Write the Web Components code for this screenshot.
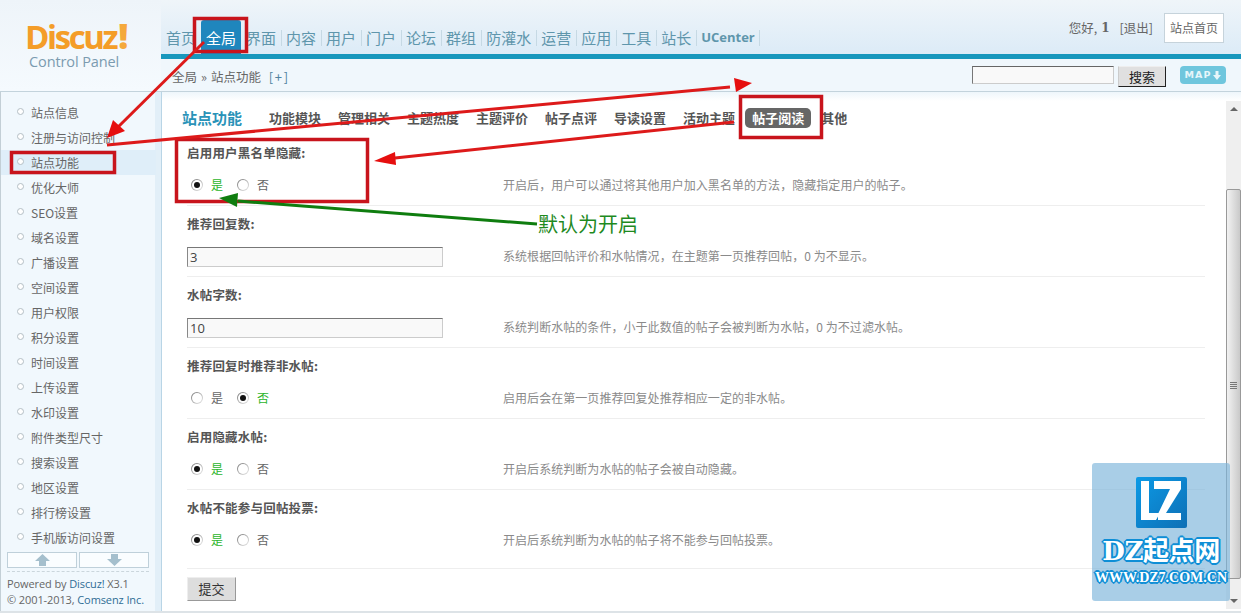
<!DOCTYPE html>
<html lang="zh">
<head>
<meta charset="utf-8">
<title>Discuz! Control Panel</title>
<style>
html, body { margin: 0; height: 100%; overflow: hidden; background: #fff; }
body { font: 12px "Noto Sans CJK SC", sans-serif; color: #666; }
</style>
</head>
<body>
<dz-app></dz-app>
<script>
const CJK = '"Noto Sans CJK SC", "Liberation Sans", sans-serif';

const define = (name, html, setup) => {
  customElements.define(name, class extends HTMLElement {
    constructor() {
      super();
      this.attachShadow({ mode: "open" });
      this.shadowRoot.innerHTML = html;
    }
    connectedCallback() {
      if (setup) setup(this, this.shadowRoot);
    }
  });
};

define("dz-logo", `
<style>
:host { display: block; width: 161px; height: 91px; box-sizing: border-box; padding-top: 21px; background: linear-gradient(#eef4f9, #f5fafe); }
.mark { font: bold 33px/30px "Open Sans", sans-serif; letter-spacing: -2.4px; color: #f49d28; padding-left: 25px; }
.mark b { color: #f5a93c; font-size: 35px; margin-left: 2px; }
.sub { font: 14.5px/18px "Open Sans", sans-serif; color: #7b9bb0; padding-left: 29px; margin-top: 1px; letter-spacing: -.1px; }
</style>
<div class="mark">Discuz<b>!</b></div>
<div class="sub">Control Panel</div>
`);

const navItems = ["首页", "全局", "界面", "内容", "用户", "门户", "论坛", "群组", "防灌水", "运营", "应用", "工具", "站长", "UCenter"];

define("dz-topnav", `
<style>
:host { display: flex; height: 54px; box-sizing: border-box; justify-content: space-between; background: linear-gradient(#eff5f9, #dcebf7); }
nav { display: flex; align-items: flex-end; }
a { display: block; height: 34px; padding: 0 5px; font: 15px/35px ${CJK}; color: #5f96ac; position: relative; }
a::after { content: ""; position: absolute; right: -0.5px; top: 10px; height: 16px; width: 1px; background: #c6d9e4; }
a.on { background: #1f86bd; color: #fff; border-radius: 3px 3px 0 0; }
a.on::after, a.before::after { display: none; }
a.en { font: bold 13px/35px "Open Sans", sans-serif; }
.me { display: flex; align-items: flex-start; padding: 13px 17px 0 0; color: #666; font: 12.5px/30px ${CJK}; }
.me b { font: bold 12px/30px "DejaVu Serif", serif; margin: 0 10px 0 4px; }
.me span { margin-right: 11px; }
.home { border: 1px solid #c6d3db; background: #fff; width: 58px; height: 28px; text-align: center; font: 12px/27px ${CJK}; }
</style>
<nav id="nav"></nav>
<div class="me">您好,<b>1</b><span>[退出]</span><div class="home">站点首页</div></div>
`, (el, root) => {
  const nav = root.querySelector("#nav");
  navItems.forEach((t) => {
    const a = document.createElement("a");
    a.textContent = t;
    if (t === "全局") a.className = "on";
    if (t === "首页") a.className = "before";
    if (t === "UCenter") a.className = "en";
    nav.appendChild(a);
  });
});

define("dz-crumb", `
<style>
:host { display: flex; align-items: center; height: 32px; box-sizing: border-box; padding: 0 15px 0 11px; background: #f0f7fc; font: 12.5px/18px ${CJK}; color: #666; }
.path { flex: 1; margin-top: 4px; white-space: nowrap; }
.path u { text-decoration: none; margin: 0 4px; }
.path i { font: 13px/18px ${CJK}; color: #4f83a0; margin-left: 5px; letter-spacing: 1.6px; }
input { width: 140px; height: 16px; border: 1px solid; border-color: #666 #ccc #ccc #777; background: #f9f9f9; padding: 0; margin: 0 4px 0 0; box-sizing: content-box; }
button { width: 48px; height: 21px; margin: 3px 14px 0 0; padding: 0; background: #e0e0e0; border: 1px solid; border-color: #eee #222 #222 #ccc; font: 13px/18px ${CJK}; color: #222; }
.map { width: 46px; height: 18px; border-radius: 4px; background: #6fc6dd; color: #e6f6fa; font: bold 9.5px/18px "DejaVu Sans", sans-serif; letter-spacing: 1px; display: flex; align-items: center; justify-content: center; gap: 2px; }
svg { display: block; }
</style>
<div class="path">全局<u>»</u>站点功能 <i>[+]</i></div>
<input type="text"><button>搜索</button>
<div class="map">MAP<svg width="8" height="9" viewBox="0 0 8 9"><path d="M2.5 0h3v4H8L4 9 0 4h2.5z" fill="#e6f6fa"/></svg></div>
`);

define("dz-header", `
<style>
:host { display: flex; height: 92px; box-sizing: border-box; border-bottom: 1px solid #c3d3dc; }
.right { flex: 1; min-width: 0; }
.bar { height: 5px; background: #1797bd; }
</style>
<dz-logo></dz-logo>
<div class="right"><dz-topnav></dz-topnav><div class="bar"></div><dz-crumb></dz-crumb></div>
`);

const menuItems = ["站点信息", "注册与访问控制", "站点功能", "优化大师", "SEO设置", "域名设置", "广播设置", "空间设置", "用户权限", "积分设置", "时间设置", "上传设置", "水印设置", "附件类型尺寸", "搜索设置", "地区设置", "排行榜设置", "手机版访问设置"];

define("dz-sidebar", `
<style>
:host { display: flex; flex-direction: column; width: 162px; box-sizing: border-box; border-left: 1px solid #c3cfd6; border-right: 1px solid #b9d5e6; background: linear-gradient(90deg, #f1f8fd 0, #f1f8fd 154px, #e2eff8 154px); font: 12px/25px ${CJK}; color: #666; position: relative; }
ul { list-style: none; margin: 8px 5px 0 0; padding: 0; }
li { height: 25px; padding-left: 30px; position: relative; white-space: nowrap; }
li::before { content: ""; position: absolute; left: 16px; top: 8px; width: 5px; height: 5px; border: 1px solid #b4bfc5; border-radius: 50%; background: #fff; }
li.on { background: #dfeef9; }
.arrows { display: flex; gap: 2px; margin: 2px 0 0 6px; width: 142px; height: 16px; }
.arrows div { flex: 1; background: #fafdff; border: 1px solid #bfd0da; display: flex; align-items: center; justify-content: center; }
.foot { margin: 3px 12px 0 6px; border-top: 1px dashed #cbd6dc; padding-top: 4px; font: 11px/16px "Open Sans", sans-serif; color: #666; white-space: nowrap; letter-spacing: -0.1px; }
.foot a { color: #2f6d95; }
</style>
<ul id="list"></ul>
<div class="arrows">
  <div><svg width="15" height="12" viewBox="0 0 15 12"><path d="M7.5 0L15 7h-4v5H4V7H0z" fill="#a5bfcd"/></svg></div>
  <div><svg width="15" height="12" viewBox="0 0 15 12"><path d="M7.5 12L15 5h-4V0H4v5H0z" fill="#a5bfcd"/></svg></div>
</div>
<div class="foot">Powered by <a>Discuz!</a> X3.1<br>© 2001-2013, <a>Comsenz Inc.</a></div>
`, (el, root) => {
  const list = root.querySelector("#list");
  menuItems.forEach((t) => {
    const li = document.createElement("li");
    li.textContent = t;
    if (t === "站点功能") li.className = "on";
    list.appendChild(li);
  });
});

const tabs = ["功能模块", "管理相关", "主题热度", "主题评价", "帖子点评", "导读设置", "活动主题", "帖子阅读", "其他"];

define("dz-tabs", `
<style>
:host { display: flex; align-items: center; height: 34px; padding-left: 20px; color: #555; font: bold 13px/20px ${CJK}; }
h3 { margin: 0 27px 0 0; font: bold 15px/20px ${CJK}; color: #2a93b8; }
span { margin-right: 17px; white-space: nowrap; }
span.on { background: #666; color: #fff; border-radius: 5px; padding: 0 7px; margin: 0 10px 0 -7px; height: 20px; }
</style>
<h3>站点功能</h3><div id="t" style="display:contents"></div>
`, (el, root) => {
  const box = root.querySelector("#t");
  tabs.forEach((t) => {
    const s = document.createElement("span");
    s.textContent = t;
    if (t === "帖子阅读") s.className = "on";
    box.appendChild(s);
  });
});

define("dz-radio", `
<style>
:host { display: inline-flex; align-items: center; font: 12px/14px ${CJK}; color: #666; }
i { width: 12px; height: 12px; border-radius: 50%; background: linear-gradient(135deg, #6f6f6f, #b5b5b5 50%, #eee); display: flex; align-items: center; justify-content: center; margin-right: 8px; margin-left: -1px; }
i::before { content: ""; width: 10px; height: 10px; border-radius: 50%; background: #fff; display: flex; }
:host([on]) { color: #2cb52c; }
:host([on]) i { position: relative; }
:host([on]) i::after { content: ""; position: absolute; left: 3px; top: 3px; width: 6px; height: 6px; border-radius: 50%; background: #111; }
</style>
<i></i><slot></slot>
`);

define("dz-setting", `
<style>
:host { display: block; height: 71px; box-sizing: border-box; border-bottom: 1px solid #eee; }
:host([last]) { height: 79px; }
h4 { margin: 0; height: 36px; font: bold 12.5px/36px ${CJK}; color: #555; letter-spacing: 0.2px; }
.row { display: flex; align-items: center; height: 28px; }
.ctl { width: 316px; display: flex; }
.desc { font: 12px/16px ${CJK}; color: #8a8a8a; white-space: nowrap; letter-spacing: .05px; }
::slotted(dz-radio) { margin-left: 5px; width: 41px; }
::slotted(input) { width: 256px; height: 20px; box-sizing: border-box; margin: 2px 0 0; padding: 0 2px; border: 1px solid; border-color: #777 #ccc #ccc #888; background: #f9f9f9; font: 13px/18px "Open Sans", sans-serif; color: #444; }
</style>
<h4 id="t"></h4>
<div class="row"><div class="ctl"><slot></slot></div><div class="desc" id="d"></div></div>
`, (el, root) => {
  root.querySelector("#t").textContent = el.getAttribute("label");
  root.querySelector("#d").textContent = el.getAttribute("desc");
});

define("dz-scrollbar", `
<style>
:host { display: block; width: 15px; background: #efefef; position: relative; flex: none; }
.up, .down { position: absolute; left: 4px; width: 0; height: 0; border: 4px solid transparent; }
.up { top: 2px; border-bottom: 4px solid #666; }
.down { bottom: 2px; border-top: 4px solid #666; }
.thumb { position: absolute; left: 0; right: 0; top: 88px; height: 390px; box-sizing: border-box; border: 1px solid #999; border-radius: 2px; background: linear-gradient(90deg, #f2f2f2, #c9c9c9); }
.grip { position: absolute; left: 3px; right: 3px; top: 192px; height: 7px; background: repeating-linear-gradient(#777 0 1px, transparent 1px 2px); }
</style>
<div class="up"></div><div class="thumb"><div class="grip"></div></div><div class="down"></div>
`);

define("dz-main", `
<style>
:host { display: flex; flex: 1; min-width: 0; background: linear-gradient(#eef6fb, #fff 9px); box-sizing: border-box; padding-top: 9px; }
.scroll { flex: 1; min-width: 0; }
.rows { margin: 0 21px 0 25px; }
.submit { margin: 8px 0 0 25px; width: 49px; height: 24px; padding: 0; background: #ddd; border: 1px solid; border-color: #eee #999 #999 #eee; font: 13px/20px ${CJK}; color: #333; display: block; }
dz-scrollbar { height: 508px; }
</style>
<div class="scroll">
  <dz-tabs></dz-tabs>
  <div class="rows">
    <dz-setting label="启用用户黑名单隐藏:" desc="开启后，用户可以通过将其他用户加入黑名单的方法，隐藏指定用户的帖子。"><dz-radio on>是</dz-radio><dz-radio>否</dz-radio></dz-setting>
    <dz-setting label="推荐回复数:" desc="系统根据回帖评价和水帖情况，在主题第一页推荐回帖，0 为不显示。"><input value="3"></dz-setting>
    <dz-setting label="水帖字数:" desc="系统判断水帖的条件，小于此数值的帖子会被判断为水帖，0 为不过滤水帖。"><input value="10"></dz-setting>
    <dz-setting label="推荐回复时推荐非水帖:" desc="启用后会在第一页推荐回复处推荐相应一定的非水帖。"><dz-radio>是</dz-radio><dz-radio on>否</dz-radio></dz-setting>
    <dz-setting label="启用隐藏水帖:" desc="开启后系统判断为水帖的帖子会被自动隐藏。"><dz-radio on>是</dz-radio><dz-radio>否</dz-radio></dz-setting>
    <dz-setting last label="水帖不能参与回帖投票:" desc="开启后系统判断为水帖的帖子将不能参与回帖投票。"><dz-radio on>是</dz-radio><dz-radio>否</dz-radio></dz-setting>
  </div>
  <button class="submit">提交</button>
</div>
<dz-scrollbar></dz-scrollbar>
`);

// red boxes and arrows drawn over the screenshot
define("dz-annotations", `
<style>
:host { position: absolute; inset: 0; pointer-events: none; display: block; }
svg { position: absolute; left: 0; top: 0; }
.note { position: absolute; left: 538px; top: 210px; font: 20px/28px ${CJK}; color: #1f8a1f; }
</style>
<svg width="1241" height="613" fill="none">
  <g stroke="#c8141c" stroke-width="3.5">
    <rect x="194.5" y="18.5" width="52" height="33"/>
    <rect x="11.5" y="152.5" width="103" height="20"/>
    <rect x="176.5" y="139.5" width="191" height="62"/>
    <rect x="740.5" y="96.5" width="81" height="41"/>
  </g>
  <g stroke="#dd1a1a" stroke-width="3">
    <path d="M204 42L115 130"/>
    <path d="M107 145L730 87"/>
    <path d="M734 122L395 158"/>
  </g>
  <g fill="#e60f0f">
    <path d="M107 138L113 120L125 131z"/>
    <path d="M752 83L734 78L736 92z"/>
    <path d="M374 161L395 152L396 165z"/>
  </g>
  <path d="M537 224L238 201" stroke="#0f7d0f" stroke-width="3"/>
  <path d="M219 198L238 193L237 207z" fill="#0f7d0f"/>
</svg>
<div class="note">默认为开启</div>
`);

define("dz-watermark", `
<style>
:host { position: absolute; left: 1092px; top: 463px; width: 138px; height: 138px; border-radius: 3px; background: rgba(125,180,219,.66); display: flex; flex-direction: column; align-items: center; }
svg { margin-top: 14px; display: block; }
.t { font: bold 26px/28px "DejaVu Serif", "Noto Sans CJK SC", serif; margin-top: 9px; color: #fff; white-space: nowrap; letter-spacing: -.4px; text-shadow: 0 0 2px #0f8fd6, 1px 1px 0 #0f8fd6, -1px -1px 0 #0f8fd6, 1px -1px 0 #0f8fd6, -1px 1px 0 #0f8fd6, 2px 0 0 #0f8fd6, -2px 0 0 #0f8fd6, 0 2px 0 #0f8fd6, 0 -2px 0 #0f8fd6; }
.u { font: bold 14px/16px "Liberation Serif", serif; margin-top: 5px; color: #fff; white-space: nowrap; text-shadow: 1px 1px 0 #0f8fd6, -1px -1px 0 #0f8fd6, 1px -1px 0 #0f8fd6, -1px 1px 0 #0f8fd6, 2px 0 0 #0f8fd6, -2px 0 0 #0f8fd6, 0 2px 0 #0f8fd6, 0 -2px 0 #0f8fd6; }
</style>
<svg width="51" height="51" viewBox="0 0 51 51">
  <defs><linearGradient id="g" x1="0" y1="0" x2="1" y2="1"><stop offset="0" stop-color="#0c9ae6"/><stop offset="1" stop-color="#0e6fb5"/></linearGradient></defs>
  <rect width="51" height="51" rx="2" fill="url(#g)"/>
  <path d="M5 4h8v32h11l-4 7H5z" fill="#fff"/>
  <path d="M18 4h27v8L30 36h15v7H22v-6L34 12H18z" fill="#fff"/>
</svg>
<div class="t">DZ起点网</div>
<div class="u">WWW.DZ7.COM.CN</div>
`);

define("dz-app", `
<style>
:host { display: flex; flex-direction: column; height: 613px; position: relative; overflow: hidden; }
.body { display: flex; flex: 1; min-height: 0; border-bottom: 2px solid #dde3e7; }
</style>
<dz-header></dz-header>
<div class="body"><dz-sidebar></dz-sidebar><dz-main></dz-main></div>
<dz-annotations></dz-annotations>
<dz-watermark></dz-watermark>
`);
</script>
</body>
</html>
